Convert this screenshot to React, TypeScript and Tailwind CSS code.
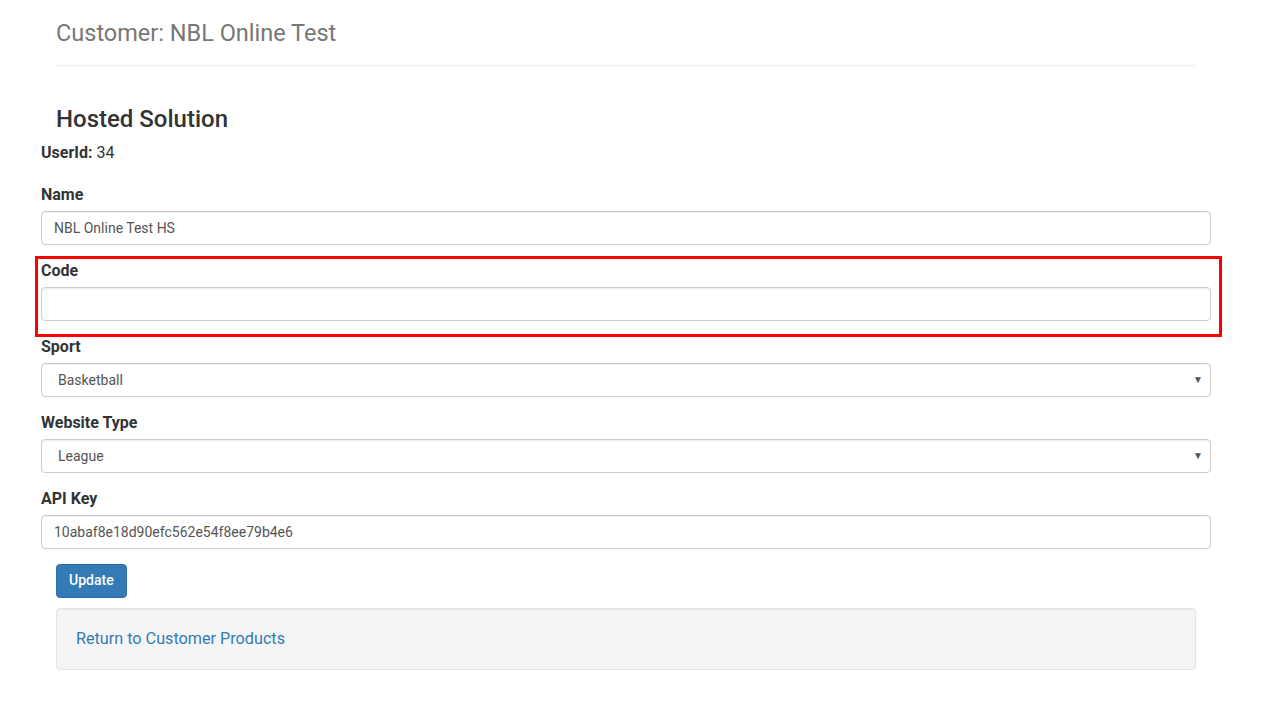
import React from 'react';

const font = { fontFamily: 'Roboto, "Liberation Sans", sans-serif' };

const Label = ({ children }: { children: React.ReactNode }) => (
  <label className="mb-[5px] block text-[16px] font-bold leading-[22px] text-[#333]">{children}</label>
);

const TextInput = ({ value }: { value: string }) => (
  <input
    readOnly
    value={value}
    className="block h-[34px] w-full rounded-[4px] border border-[#ccc] bg-white px-[12px] text-[14px] text-[#555] shadow-[inset_0_1px_1px_rgba(0,0,0,0.075)] outline-none"
  />
);

const SelectBox = ({ value }: { value: string }) => (
  <div className="relative flex h-[34px] w-full items-center rounded-[4px] border border-[#ccc] bg-white pl-[16px] text-[14px] text-[#555] shadow-[inset_0_1px_1px_rgba(0,0,0,0.075)]">
    <span>{value}</span>
    <span className="absolute right-[7px] top-[8px] text-[10px] text-[#555]">▼</span>
  </div>
);

const Group = ({ label, children }: { label: string; children: React.ReactNode }) => (
  <div className="mb-[15px]">
    <Label>{label}</Label>
    {children}
  </div>
);

export default function App() {
  return (
    <div className="min-h-[718px] bg-white pl-[41px] pr-[52px]" style={font}>
      <div className="px-[15px]">
        <div className="border-b border-[#eee] pb-[19px] pt-[20px]">
          <h1 className="text-[23.5px] font-normal leading-[26px] text-[#777]">Customer: NBL Online Test</h1>
        </div>
        <h2 className="mt-[40px] text-[24px] font-medium leading-[26px] text-[#333]">Hosted Solution</h2>
      </div>

      <div className="mt-[11px] text-[16px] leading-[20px] text-[#333]">
        <span className="font-bold">UserId:</span> 34
      </div>

      <div className="mt-[21px]">
        <Group label="Name">
          <TextInput value="NBL Online Test HS" />
        </Group>

        <div className="relative">
          <div className="pointer-events-none absolute -left-[6px] -right-[11px] -top-[4px] h-[81px] border-[3px] border-[#ff0000]" />
          <Group label="Code">
            <TextInput value="" />
          </Group>
        </div>

        <Group label="Sport">
          <SelectBox value="Basketball" />
        </Group>

        <Group label="Website Type">
          <SelectBox value="League" />
        </Group>

        <Group label="API Key">
          <TextInput value="10abaf8e18d90efc562e54f8ee79b4e6" />
        </Group>
      </div>

      <div className="px-[15px]">
        <button className="h-[34px] rounded-[4px] border border-[#2e6da4] bg-[#337ab7] px-[12px] pb-[1px] text-[14px] font-medium text-white">
          Update
        </button>
        <div className="mt-[10px] flex h-[62px] items-center rounded-[4px] border border-[#e3e3e3] bg-[#f5f5f5] px-[19px] shadow-[inset_0_1px_1px_rgba(0,0,0,0.05)]">
          <a href="#" className="text-[16.2px] text-[#337ab7]">Return to Customer Products</a>
        </div>
      </div>
    </div>
  );
}
